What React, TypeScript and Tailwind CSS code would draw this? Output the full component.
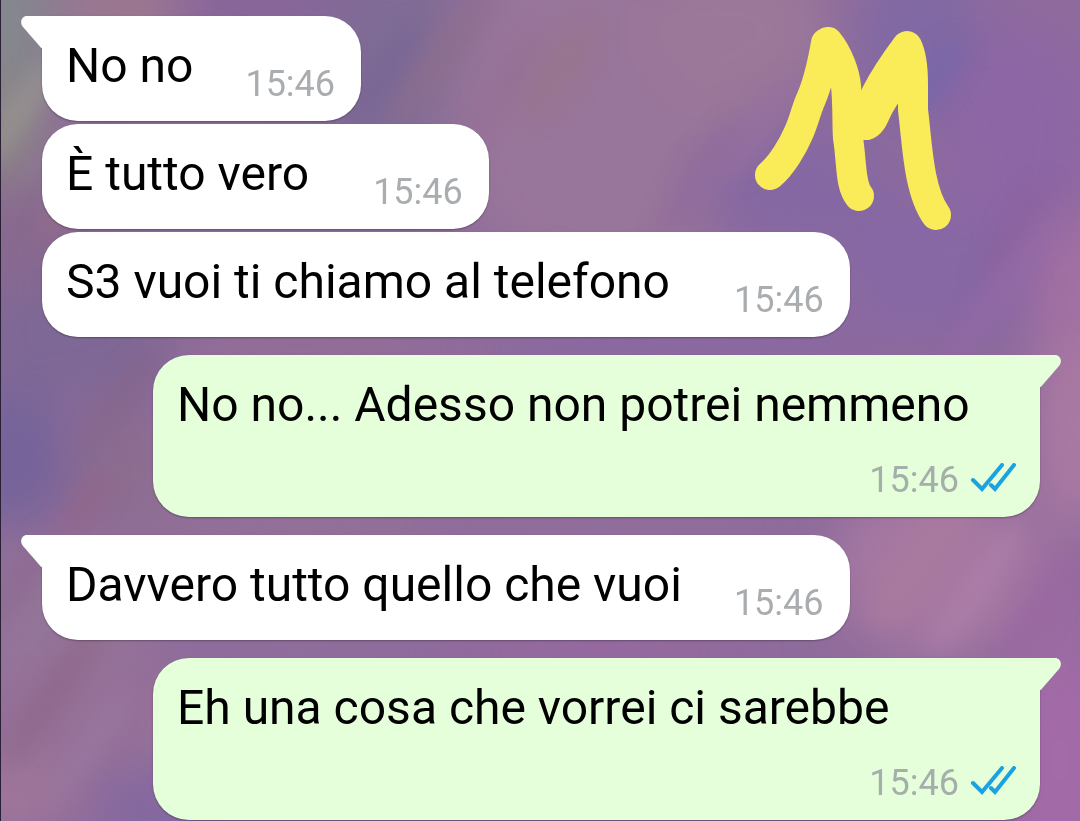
import React from 'react';

interface Message {
  id: number;
  text: string;
  time: string;
  mine?: boolean;
  tail?: boolean;
  gap?: string;
}

const messages: Message[] = [
  { id: 1, text: 'No no', time: '15:46', tail: true, gap: 'gap-[52px]' },
  { id: 2, text: 'È tutto vero', time: '15:46', gap: 'gap-16' },
  { id: 3, text: 'S3 vuoi ti chiamo al telefono', time: '15:46', gap: 'gap-16' },
  { id: 4, text: 'No no... Adesso non potrei nemmeno', time: '15:46', mine: true, tail: true },
  { id: 5, text: 'Davvero tutto quello che vuoi', time: '15:46', tail: true, gap: 'gap-[52px]' },
  { id: 6, text: 'Eh una cosa che vorrei ci sarebbe', time: '15:46', mine: true, tail: true },
];

// Large colour areas of the chat wallpaper: cx, cy, rx, ry, fill
const areas: [number, number, number, number, string][] = [
  [0, 40, 60, 110, '#84878e'],
  [5, 130, 40, 60, '#8b8684'],
  [130, 5, 70, 30, '#a07b8c'],
  [260, 5, 90, 40, '#87659a'],
  [395, 60, 80, 100, '#7f6c95'],
  [600, 110, 160, 180, '#98759a'],
  [740, 30, 90, 80, '#9b789a'],
  [800, 190, 100, 60, '#8567a3'],
  [920, 40, 60, 80, '#8069a5'],
  [950, 270, 110, 70, '#8767a5'],
  [1020, 130, 80, 110, '#8d66a5'],
  [1080, 290, 50, 80, '#a370a2'],
  [1080, 430, 50, 100, '#aa79a3'],
  [30, 240, 70, 60, '#88698f'],
  [70, 340, 110, 60, '#7e6895'],
  [10, 460, 60, 70, '#75649a'],
  [130, 470, 60, 60, '#8c6d90'],
  [300, 345, 140, 20, '#946e94'],
  [700, 345, 200, 20, '#8766a4'],
  [300, 525, 160, 18, '#967494'],
  [600, 525, 160, 18, '#92709b'],
  [940, 570, 110, 90, '#a678a2'],
  [1070, 610, 50, 60, '#9a6ba2'],
  [1060, 760, 60, 110, '#a36ba7'],
  [50, 620, 100, 80, '#94749a'],
  [90, 720, 110, 70, '#967198'],
  [15, 800, 60, 40, '#a0769a'],
  [150, 805, 60, 40, '#8367a0'],
  [300, 650, 120, 20, '#8f6d9b'],
  [600, 650, 160, 20, '#9868a0'],
];

// Thin slanted streaks over the areas: cx, cy, length, thickness, fill
const streaks: [number, number, number, number, string][] = [
  [20, 110, 70, 14, '#9a9693'],
  [75, 190, 60, 12, '#9a6f8c'],
  [380, 80, 70, 14, '#776594'],
  [440, 60, 80, 16, '#8d6e8b'],
  [500, 90, 70, 16, '#957095'],
  [560, 70, 60, 22, '#98748c'],
  [700, 180, 70, 14, '#906b9d'],
  [760, 130, 60, 14, '#9771a0'],
  [935, 80, 50, 14, '#7566a9'],
  [1015, 230, 60, 10, '#89609a'],
  [1000, 290, 90, 12, '#966aa6'],
  [120, 400, 60, 12, '#846588'],
  [85, 505, 40, 14, '#946688'],
  [20, 580, 60, 14, '#8b688f'],
  [55, 690, 90, 16, '#8e6789'],
  [90, 745, 70, 14, '#9878a0'],
  [920, 560, 80, 22, '#ab7c9e'],
  [975, 590, 80, 14, '#ad80aa'],
  [1030, 620, 70, 14, '#9868a0'],
];

function Wallpaper() {
  return (
    <svg
      className="absolute inset-0 h-full w-full"
      viewBox="0 0 1080 821"
      preserveAspectRatio="none"
      aria-hidden="true"
    >
      <defs>
        <filter id="wide" x="-20%" y="-20%" width="140%" height="140%">
          <feGaussianBlur stdDeviation="26" />
        </filter>
        <filter id="narrow" x="-20%" y="-20%" width="140%" height="140%">
          <feGaussianBlur stdDeviation="11" />
        </filter>
      </defs>
      <rect width="1080" height="821" fill="#8e6b9b" />
      <g filter="url(#wide)">
        {areas.map(([cx, cy, rx, ry, fill]) => (
          <ellipse key={`${cx}-${cy}`} cx={cx} cy={cy} rx={rx} ry={ry} fill={fill} />
        ))}
      </g>
      <g filter="url(#narrow)" opacity="0.7">
        {streaks.map(([cx, cy, rx, ry, fill]) => (
          <ellipse
            key={`${cx}-${cy}`}
            cx={cx}
            cy={cy}
            rx={rx}
            ry={ry}
            fill={fill}
            transform={`rotate(-55 ${cx} ${cy})`}
          />
        ))}
      </g>
      <rect width="1" height="821" fill="#2a2036" />
    </svg>
  );
}

function Scribble() {
  return (
    <svg
      className="absolute right-[120px] top-5 h-[220px] w-[210px]"
      viewBox="750 20 210 220"
      fill="none"
      stroke="#faeb58"
      strokeWidth="30"
      strokeLinecap="round"
      strokeLinejoin="round"
      aria-hidden="true"
    >
      <path d="M770 175C782 165 793 146 799 132C805 118 806 110 811 99C817 85 822 66 826 43" />
      <path d="M828 42C838 54 845 74 846 86C848 104 847 128 848 138C852 163 850 185 859 196" />
      <path d="M866 125C873 123 875 112 880 104C890 88 897 76 905 60" />
      <path d="M866 125C867 102 892 66 907 46C912 56 913 68 913 84L913 110C917 140 918 190 936 215" />
      <path d="M855 110L866 124L880 100" />
    </svg>
  );
}

function Tail({ mine }: { mine?: boolean }) {
  return (
    <svg
      className={mine ? 'absolute -right-[21px] top-0 h-8 w-[22px] -scale-x-100' : 'absolute -left-[21px] top-0 h-8 w-[22px]'}
      viewBox="0 0 22 32"
      fill={mine ? '#e5ffdb' : '#ffffff'}
      aria-hidden="true"
    >
      <path d="M22 0H6C1 0-2 6 2 11L22 34Z" />
    </svg>
  );
}

function ReadTicks() {
  return (
    <svg
      className="mt-1 h-[30px] w-[46px]"
      viewBox="0 0 46 30"
      fill="none"
      stroke="#1aa3e0"
      strokeWidth="4"
      strokeLinecap="round"
      aria-label="Read"
    >
      <path d="M3 17L12 26L32 2" />
      <path d="M21 22L25 26L44 2" />
    </svg>
  );
}

function Bubble({ message }: { message: Message }) {
  const { text, time, mine, tail, gap } = message;

  if (mine) {
    return (
      <div className="relative ml-[111px] flex h-[162px] flex-col justify-between rounded-[36px] rounded-tr-none bg-[#e5ffdb] px-6 pt-[22px] pb-4 shadow-[0_1px_2px_rgba(0,0,0,0.3)]">
        <Tail mine />
        <p className="whitespace-nowrap text-[48px] leading-[56px] text-black">{text}</p>
        <div className="flex items-start justify-end gap-[11px]">
          <time className="text-[36px] leading-[42px] text-[#a5aeaa]">{time}</time>
          <ReadTicks />
        </div>
      </div>
    );
  }

  return (
    <div
      className={`relative flex h-[105px] w-fit items-end rounded-[36px] bg-white pl-6 pr-[26px] shadow-[0_1px_2px_rgba(0,0,0,0.3)] ${gap} ${tail ? 'rounded-tl-none' : ''}`}
    >
      {tail && <Tail />}
      <p className="whitespace-nowrap pb-[27px] text-[48px] leading-[56px] text-black">{text}</p>
      <time className="pb-4 text-[36px] leading-[42px] text-[#a9adaf]">{time}</time>
    </div>
  );
}

export default function App() {
  return (
    <main className="relative min-h-screen overflow-hidden bg-[#8e6b9b] font-['Roboto',sans-serif]">
      <Wallpaper />
      <div className="relative flex flex-col pl-[42px] pr-10 pt-4">
        {messages.map((message, index) => {
          const previous = messages[index - 1];
          const spacing = !previous ? '' : message.tail ? 'mt-[18px]' : 'mt-[3px]';
          return (
            <div key={message.id} className={spacing}>
              <Bubble message={message} />
            </div>
          );
        })}
      </div>
      <Scribble />
    </main>
  );
}
